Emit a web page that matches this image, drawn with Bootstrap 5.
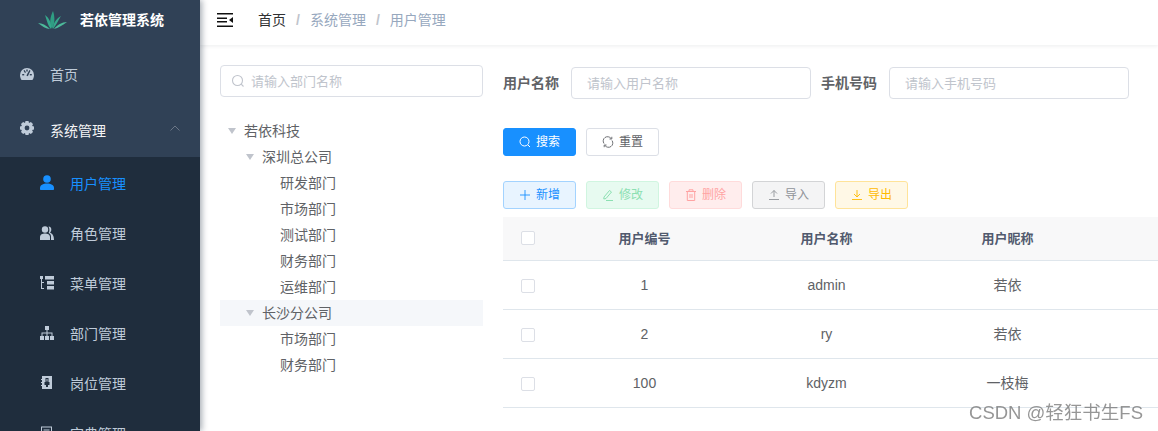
<!DOCTYPE html>
<html lang="zh-CN">
<head>
  <meta charset="UTF-8">
  <meta name="viewport" content="width=device-width, initial-scale=1.0">
  <title>若依管理系统 - 用户管理</title>
  <link href="https://cdn.jsdelivr.net/npm/bootstrap@5.3.2/dist/css/bootstrap.min.css" rel="stylesheet">
  <style>
    html, body {
      height: 100%;
      overflow: hidden;
    }

    body {
      font-family: "Liberation Sans", "Noto Sans CJK SC", sans-serif;
      font-size: 14px;
      color: #606266;
      background-color: #fff;
    }

    /* sidebar */
    .side-bar {
      width: 200px;
      height: 431px;
      flex: none;
      overflow: hidden;
      background-color: #304156;
      box-shadow: 2px 0 6px rgba(0, 21, 41, .35);
      position: relative;
      z-index: 3;
    }

    .side-logo {
      height: 47px;
      padding: 0 0 7px 38px;
      color: #fff;
      font-size: 14px;
      font-weight: 700;
      gap: 13px;
    }

    .side-item {
      height: 56px;
      padding-left: 20px;
      color: #bfcbd9;
    }

    .side-item.open-item {
      color: #f4f4f5;
      height: 54px;
      padding-top: 2px;
    }

    .side-item svg {
      margin-right: 16px;
      margin-top: -3px;
    }

    .side-item.open-item svg {
      margin-top: -7px;
    }

    .side-item .side-arrow {
      margin: -7px 20px 0 auto;
    }

    .side-sub {
      background-color: #1f2d3d;
      padding-top: 2px;
    }

    .side-sub .side-item {
      height: 50px;
      padding-left: 40px;
    }

    .side-sub .side-item.active-item {
      color: #1890ff;
    }

    /* top bar */
    .main-col {
      min-width: 0;
    }

    .top-bar {
      height: 45px;
      flex: none;
      padding: 0 0 5px 17px;
      box-shadow: 0 1px 4px rgba(0, 21, 41, .08);
      position: relative;
      z-index: 2;
    }

    .top-bar .breadcrumb {
      margin: 0 0 0 25px;
      font-size: 14px;
      --bs-breadcrumb-divider-color: #c0c4cc;
      --bs-breadcrumb-item-active-color: #97a8be;
      --bs-breadcrumb-item-padding-x: 10px;
    }

    .top-bar .breadcrumb-item:first-child {
      color: #303133;
    }

    .top-bar .breadcrumb-item + .breadcrumb-item::before {
      font-weight: 700;
    }

    /* left tree */
    .work-area {
      padding: 20px 0 0 20px;
      gap: 20px;
      min-height: 0;
    }

    .tree-col {
      width: 263px;
      flex: none;
    }

    .search-box {
      position: relative;
    }

    .search-box svg {
      position: absolute;
      left: 11px;
      top: 9px;
    }

    .soft-input {
      height: 32px;
      border: 1px solid #dcdfe6;
      border-radius: 4px;
      font-size: 13px;
      color: #606266;
      padding: 0 15px;
      box-shadow: none;
    }

    .soft-input::placeholder {
      color: #c0c4cc;
    }

    .search-box .soft-input {
      padding-left: 30px;
    }

    .dept-tree {
      margin-top: 21px;
    }

    .dept-node {
      height: 26px;
      line-height: 26px;
      color: #606266;
    }

    .dept-node.lvl-1 {
      padding-left: 18px;
    }

    .dept-node.lvl-2 {
      padding-left: 36px;
    }

    .dept-node.picked {
      background-color: #f5f7fa;
    }

    .dept-caret {
      width: 24px;
      flex: none;
      padding-left: 8px;
    }

    .dept-caret i {
      display: block;
      width: 0;
      height: 0;
      margin-top: -1px;
      border-left: 4.5px solid transparent;
      border-right: 4.5px solid transparent;
      border-top: 6px solid #c0c4cc;
    }

    /* right side */
    .user-col {
      flex: 1 1 0;
      min-width: 0;
      overflow: hidden;
      padding-top: 2px;
    }

    .query-line {
      height: 32px;
    }

    .query-line label {
      font-weight: 700;
      width: 68px;
      flex: none;
    }

    .query-line .soft-input {
      width: 240px;
      flex: none;
      margin-right: 10px;
    }

    .btn-line {
      gap: 10px;
    }

    .query-btns {
      margin-top: 29px;
    }

    .tool-btns {
      margin-top: 25px;
    }

    .small-btn {
      width: 73px;
      height: 28px;
      padding: 0;
      font-size: 12px;
      border-radius: 3px;
      gap: 5px;
      --bs-btn-font-size: 12px;
    }

    .small-btn.b-search {
      background-color: #1890ff;
      border-color: #1890ff;
      color: #fff;
    }

    .small-btn.b-reset {
      background-color: #fff;
      border-color: #dcdfe6;
      color: #606266;
    }

    .small-btn.b-add {
      background-color: #e8f4ff;
      border-color: #a3d3ff;
      color: #1890ff;
    }

    .small-btn.b-edit {
      background-color: #e7faf0;
      border-color: #d0f5e0;
      color: #8ce0b2;
    }

    .small-btn.b-del {
      background-color: #ffeded;
      border-color: #ffdbdb;
      color: #ffa3a3;
    }

    .small-btn.b-imp {
      background-color: #f4f4f5;
      border-color: #d3d4d6;
      color: #909399;
    }

    .small-btn.b-exp {
      background-color: #fff8e6;
      border-color: #ffe399;
      color: #ffba00;
    }

    .user-table {
      width: 1000px;
      margin: 8px 0 0;
      table-layout: fixed;
      font-size: 14px;
      --bs-table-color: #606266;
      --bs-table-border-color: #dfe6ec;
    }

    .c-tick {
      width: 50px;
    }

    .c-first {
      width: 183px;
    }

    .c-text {
      width: 181px;
    }

    .user-table th {
      height: 43px;
      padding: 0;
      font-size: 13px;
      vertical-align: middle;
      text-align: center;
      background-color: #f8f8f9;
      color: #515a6e;
    }

    .user-table td {
      height: 49px;
      padding: 2px 0 0;
      vertical-align: middle;
      text-align: center;
    }

    .tick-box {
      appearance: none;
      width: 14px;
      height: 14px;
      margin: 0;
      background-color: #fff;
      border: 1px solid #dcdfe6;
      border-radius: 2px;
    }

    .mark-text {
      position: fixed;
      right: 15px;
      bottom: 6px;
      font-size: 18.5px;
      line-height: 24px;
      color: rgba(110, 110, 110, .72);
      z-index: 5;
    }
  </style>
</head>
<body>

  <div class="d-flex">
    <div class="side-bar">
      <div class="side-logo d-flex align-items-center">
        <svg width="29" height="19" viewBox="0 0 29 19">
          <path d="M14 18C11 13 12 6 15 0C17 6 17 13 14 18Z" fill="#2f9e83"/>
          <path d="M13 18C10 15 9 10 7 4C11 7 14 12 13 18Z" fill="#36a88c"/>
          <path d="M15 18C18 14 20 10 23 5C19 7 15 12 15 18Z" fill="#36a88c"/>
          <path d="M12 18C8 14 4 12 0 12C4 15 8 18 12 18Z" fill="#4dbb9b"/>
          <path d="M16 18C20 17 25 14 29 11C24 11 19 14 16 18Z" fill="#4dbb9b"/>
        </svg>
        <span>若依管理系统</span>
      </div>

      <div class="side-item d-flex align-items-center">
        <svg width="14" height="12" viewBox="0 0 14 12" fill="#bfcbd9">
          <path d="M7 0A7 7 0 0 0 0 7C0 9 .6 10.6 1.6 12H12.4C13.4 10.6 14 9 14 7A7 7 0 0 0 7 0Z"/>
          <g fill="#304156"><rect x="6.3" y="1.5" width="1.4" height="2"/><rect x="2.2" y="6" width="2" height="1.4"/><rect x="9.8" y="6" width="2" height="1.4"/><path d="M3.5 2.8L4.6 2L6 4.2L5 5Z"/><path d="M10.5 2.8L9.4 2L6.4 7.5L7.8 8.2Z"/></g>
        </svg>
        <span>首页</span>
      </div>
      <div class="side-item open-item d-flex align-items-center">
        <svg width="14" height="14" viewBox="0 0 14 14" fill="#bfcbd9">
          <path fill-rule="evenodd" d="M5.5 0H8.5L9 1.9L10.9 1L13 3.1L12.1 5L14 5.5V8.5L12.1 9L13 10.9L10.9 13L9 12.1L8.5 14H5.5L5 12.1L3.1 13L1 10.9L1.9 9L0 8.5V5.5L1.9 5L1 3.1L3.1 1L5 1.9ZM7 4.6A2.4 2.4 0 1 0 7 9.4A2.4 2.4 0 1 0 7 4.6Z"/>
        </svg>
        <span>系统管理</span>
        <svg class="side-arrow" width="10" height="6" viewBox="0 0 10 6" fill="none" stroke="#6b7686" stroke-width="1">
          <path d="M.5 5.5L5 1L9.5 5.5"/>
        </svg>
      </div>

      <div class="side-sub">
        <div class="side-item active-item d-flex align-items-center">
          <svg width="14" height="15" viewBox="0 0 14 15" fill="#1890ff">
            <circle cx="7" cy="4" r="3.8"/>
            <path d="M0 13C0 10 3 8.5 7 8.5S14 10 14 13V14C14 14.6 13.6 15 13 15H1C.4 15 0 14.6 0 14Z"/>
          </svg>
          <span>用户管理</span>
        </div>
        <div class="side-item d-flex align-items-center">
          <svg width="14" height="14" viewBox="0 0 14 14" fill="#bfcbd9">
            <circle cx="5" cy="3.5" r="3.2"/>
            <path d="M0 14V11C0 8.5 2.5 7.5 5 7.5S10 8.5 10 11V14Z"/>
            <path d="M8.5 .5C10.5 .5 11.5 2 11.3 4C11.2 5.2 10.6 6.2 10 6.8C12 7.5 14 9 14 14H11V10.5C11 8.8 10 7.6 8.6 7C9.6 5.5 9.8 2.5 8.5 .5Z"/>
          </svg>
          <span>角色管理</span>
        </div>
        <div class="side-item d-flex align-items-center">
          <svg width="14" height="14" viewBox="0 0 14 14" fill="#bfcbd9">
            <rect x="0" y="0" width="3" height="3"/>
            <rect x="1" y="3" width="1" height="10"/>
            <rect x="2" y="6" width="2" height="1"/>
            <rect x="2" y="12" width="2" height="1"/>
            <rect x="5" y="0" width="9" height="3.5"/>
            <rect x="7" y="5" width="7" height="3.5"/>
            <rect x="7" y="10" width="7" height="3.5"/>
          </svg>
          <span>菜单管理</span>
        </div>
        <div class="side-item d-flex align-items-center">
          <svg width="14" height="14" viewBox="0 0 14 14" fill="#bfcbd9">
            <rect x="5" y="0" width="4" height="4"/>
            <rect x="6.5" y="4" width="1" height="6"/>
            <path d="M1.5 6.5H12.5V10H11.5V7.5H2.5V10H1.5Z"/>
            <rect x="0" y="10" width="4" height="4"/>
            <rect x="5" y="10" width="4" height="4"/>
            <rect x="10" y="10" width="4" height="4"/>
          </svg>
          <span>部门管理</span>
        </div>
        <div class="side-item d-flex align-items-center">
          <svg width="14" height="13" viewBox="0 0 14 13" fill="#bfcbd9">
            <rect x="2" y="0" width="10" height="13"/>
            <rect x="1" y="3" width="2" height="1"/>
            <rect x="1" y="6" width="2" height="1"/>
            <rect x="1" y="9" width="2" height="1"/>
            <path d="M5.5 2H8.5V6H9.5V9H8V11H6V9H4.5V6H5.5Z" fill="#1f2d3d"/>
            <rect x="6.5" y="3" width="1" height="2.5"/>
          </svg>
          <span>岗位管理</span>
        </div>
        <div class="side-item d-flex align-items-center">
          <svg width="14" height="14" viewBox="0 0 14 14" fill="none" stroke="#bfcbd9">
            <rect x="1.5" y="1" width="10" height="12"/>
            <path d="M3.5 4H9.5M3.5 6.5H9.5"/>
          </svg>
          <span>字典管理</span>
        </div>
      </div>
    </div>

    <div class="main-col flex-grow-1 d-flex flex-column">
      <div class="top-bar d-flex align-items-center bg-white">
        <svg width="16" height="14" viewBox="0 0 16 14" fill="#101010">
          <rect x="0" y="0" width="16" height="1.5"/>
          <rect x="0" y="4.5" width="10" height="1.5"/>
          <rect x="0" y="8" width="10" height="1.5"/>
          <rect x="0" y="12.5" width="16" height="1.5"/>
          <path d="M16 4V10L12 7Z"/>
        </svg>
        <nav aria-label="breadcrumb">
          <ol class="breadcrumb">
            <li class="breadcrumb-item">首页</li>
            <li class="breadcrumb-item active">系统管理</li>
            <li class="breadcrumb-item active">用户管理</li>
          </ol>
        </nav>
      </div>

      <div class="work-area d-flex flex-grow-1">
        <div class="tree-col">
          <div class="search-box">
            <svg width="14" height="14" viewBox="0 0 14 14" fill="none" stroke="#c0c4cc" stroke-width="1.1">
              <circle cx="6.5" cy="6.5" r="5"/>
              <path d="M10.2 10.2L12.5 12.5"/>
            </svg>
            <input type="text" class="form-control soft-input" placeholder="请输入部门名称">
          </div>

          <div class="dept-tree">
            <div class="dept-node d-flex align-items-center"><span class="dept-caret"><i></i></span>若依科技</div>
            <div class="dept-node lvl-1 d-flex align-items-center"><span class="dept-caret"><i></i></span>深圳总公司</div>
            <div class="dept-node lvl-2 d-flex align-items-center"><span class="dept-caret"></span>研发部门</div>
            <div class="dept-node lvl-2 d-flex align-items-center"><span class="dept-caret"></span>市场部门</div>
            <div class="dept-node lvl-2 d-flex align-items-center"><span class="dept-caret"></span>测试部门</div>
            <div class="dept-node lvl-2 d-flex align-items-center"><span class="dept-caret"></span>财务部门</div>
            <div class="dept-node lvl-2 d-flex align-items-center"><span class="dept-caret"></span>运维部门</div>
            <div class="dept-node lvl-1 picked d-flex align-items-center"><span class="dept-caret"><i></i></span>长沙分公司</div>
            <div class="dept-node lvl-2 d-flex align-items-center"><span class="dept-caret"></span>市场部门</div>
            <div class="dept-node lvl-2 d-flex align-items-center"><span class="dept-caret"></span>财务部门</div>
          </div>
        </div>

        <div class="user-col">
          <div class="query-line d-flex align-items-center">
            <label>用户名称</label>
            <input type="text" class="form-control soft-input" placeholder="请输入用户名称">
            <label>手机号码</label>
            <input type="text" class="form-control soft-input" placeholder="请输入手机号码">
          </div>

          <div class="btn-line query-btns d-flex">
            <button type="button" class="btn small-btn b-search d-flex align-items-center justify-content-center">
              <svg width="12" height="12" viewBox="0 0 12 12" fill="none" stroke="#fff"><circle cx="5.5" cy="5.5" r="4.5"/><path d="M9 9L11 11"/></svg>
              搜索
            </button>
            <button type="button" class="btn small-btn b-reset d-flex align-items-center justify-content-center">
              <svg width="12" height="12" viewBox="0 0 12 12" fill="none" stroke="#606266" stroke-width=".9"><path d="M2 7.5A4.2 4.2 0 0 1 9 2.5M10 4.5A4.2 4.2 0 0 1 3 9.5"/><path d="M7.5 3H9.8V.8M4.5 9H2.2V11.2"/></svg>
              重置
            </button>
          </div>

          <div class="btn-line tool-btns d-flex">
            <button type="button" class="btn small-btn b-add d-flex align-items-center justify-content-center">
              <svg width="12" height="12" viewBox="0 0 12 12" stroke="#1890ff" stroke-width=".9"><path d="M1 6H11M6 1V11"/></svg>
              新增
            </button>
            <button type="button" class="btn small-btn b-edit d-flex align-items-center justify-content-center">
              <svg width="12" height="12" viewBox="0 0 12 12" fill="none" stroke="#8ce0b2"><path d="M2 8L7.5 1.5L9.5 3L4 9.5L1.8 10Z"/><path d="M4 11.5H11"/></svg>
              修改
            </button>
            <button type="button" class="btn small-btn b-del d-flex align-items-center justify-content-center">
              <svg width="12" height="12" viewBox="0 0 12 12" fill="none" stroke="#ffa3a3"><path d="M1 2.5H11M4 2.5V.8H8V2.5M2.3 2.5V11.5H9.7V2.5M5 5V9M7 5V9"/></svg>
              删除
            </button>
            <button type="button" class="btn small-btn b-imp d-flex align-items-center justify-content-center">
              <svg width="12" height="12" viewBox="0 0 12 12" fill="none" stroke="#909399" stroke-width=".9"><path d="M1 10.5H11M6 8V1.5M3 4.5L6 1.5L9 4.5"/></svg>
              导入
            </button>
            <button type="button" class="btn small-btn b-exp d-flex align-items-center justify-content-center">
              <svg width="12" height="12" viewBox="0 0 12 12" fill="none" stroke="#ffba00" stroke-width=".9"><path d="M1 10.5H11M6 1V8M3 5L6 8L9 5"/></svg>
              导出
            </button>
          </div>

          <table class="table user-table">
            <colgroup>
              <col class="c-tick">
              <col class="c-first">
              <col class="c-text">
              <col class="c-text">
              <col>
            </colgroup>
            <thead>
              <tr>
                <th><input type="checkbox" class="tick-box d-block mx-auto" aria-label="全选"></th>
                <th>用户编号</th>
                <th>用户名称</th>
                <th>用户昵称</th>
                <th></th>
              </tr>
            </thead>
            <tbody>
              <tr>
                <td><input type="checkbox" class="tick-box d-block mx-auto" aria-label="选择"></td>
                <td>1</td>
                <td>admin</td>
                <td>若依</td>
                <td></td>
              </tr>
              <tr>
                <td><input type="checkbox" class="tick-box d-block mx-auto" aria-label="选择"></td>
                <td>2</td>
                <td>ry</td>
                <td>若依</td>
                <td></td>
              </tr>
              <tr>
                <td><input type="checkbox" class="tick-box d-block mx-auto" aria-label="选择"></td>
                <td>100</td>
                <td>kdyzm</td>
                <td>一枝梅</td>
                <td></td>
              </tr>
            </tbody>
          </table>
        </div>
      </div>
    </div>
  </div>

  <div class="mark-text">CSDN @轻狂书生FS</div>

  <script src="https://cdn.jsdelivr.net/npm/bootstrap@5.3.2/dist/js/bootstrap.bundle.min.js"></script>
</body>
</html>
